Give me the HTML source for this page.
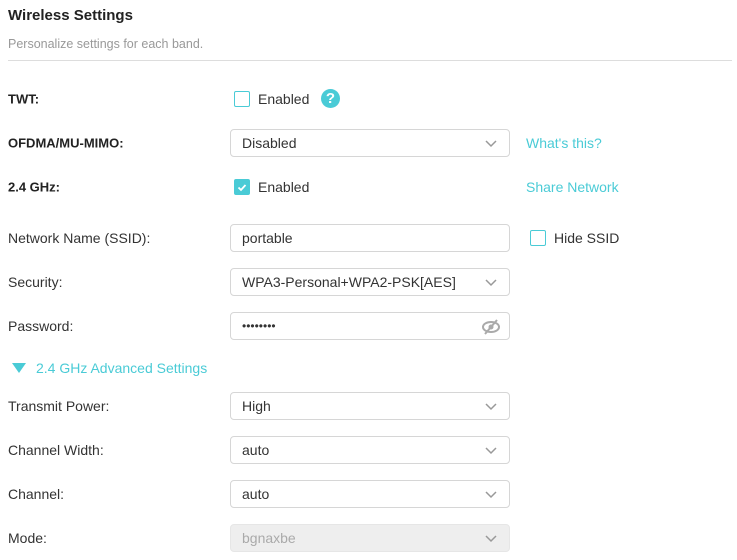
<!DOCTYPE html>
<html><head><style>
body{margin:0;width:737px;height:560px;overflow:hidden;background:#fff;font-family:"Liberation Sans",sans-serif;font-size:14px;color:#333;position:relative}
.a{position:absolute}
.lbl{position:absolute;left:8px;transform:translateY(-50%)}
.b{font-weight:bold;color:#222;font-size:13px}
.sel{position:absolute;left:230px;width:280px;height:28px;border:1px solid #d6d6d6;border-radius:4px;box-sizing:border-box;padding-left:11px;line-height:27px;font-size:14px;color:#333}
.sel svg{position:absolute;right:12px;top:10px}
.cb{position:absolute;width:14px;height:14px;border:1px solid #4acbd6;border-radius:2px}
.teal{color:#4acbd6}
</style></head><body>
<div class="a" style="left:8px;top:7px;font-size:15px;font-weight:bold;color:#222">Wireless Settings</div>
<div class="a" style="left:8px;top:37px;font-size:12.5px;color:#999">Personalize settings for each band.</div>
<div class="a" style="left:8px;top:60px;width:724px;height:1px;background:#ddd"></div>

<div class="lbl b" style="top:99px">TWT:</div>
<div class="cb" style="left:234px;top:91px"></div>
<div class="a" style="left:258px;top:91px">Enabled</div>
<div class="a" style="left:321px;top:89px;width:19px;height:19px;border-radius:50%;background:#4acbd6;color:#fff;font-weight:bold;text-align:center;line-height:19px;font-size:15px">?</div>

<div class="lbl b" style="top:143px">OFDMA/MU-MIMO:</div>
<div class="sel" style="top:129px">Disabled<svg width="12" height="8"><path d="M1 1l5 5 5-5" stroke="#999" stroke-width="1.5" fill="none"/></svg></div>
<div class="a teal" style="left:526px;top:135px">What's this?</div>

<div class="lbl b" style="top:187px">2.4 GHz:</div>
<div class="cb" style="left:234px;top:179px;background:#4acbd6"><svg width="14" height="14" style="position:absolute;left:0;top:0"><path d="M3.5 7.5l2.5 2.5 4.5-5" stroke="#fff" stroke-width="1.8" fill="none"/></svg></div>
<div class="a" style="left:258px;top:179px">Enabled</div>
<div class="a teal" style="left:526px;top:179px">Share Network</div>

<div class="lbl" style="top:238px">Network Name (SSID):</div>
<div class="sel" style="top:224px">portable</div>
<div class="cb" style="left:530px;top:230px"></div>
<div class="a" style="left:554px;top:230px">Hide SSID</div>

<div class="lbl" style="top:282px">Security:</div>
<div class="sel" style="top:268px">WPA3-Personal+WPA2-PSK[AES]<svg width="12" height="8"><path d="M1 1l5 5 5-5" stroke="#999" stroke-width="1.5" fill="none"/></svg></div>

<div class="lbl" style="top:326px">Password:</div>
<div class="sel" style="top:312px;font-size:12px">••••••••<svg width="22" height="16" style="top:6px;right:7px"><ellipse cx="11" cy="8" rx="8" ry="5" fill="none" stroke="#aaa" stroke-width="2"/><circle cx="11" cy="8" r="2.5" fill="#aaa"/><path d="M5 15L17 1" stroke="#aaa" stroke-width="2"/></svg></div>

<svg class="a" style="left:12px;top:363px" width="14" height="10"><path d="M0 0h14L7 10z" fill="#4acbd6"/></svg>
<div class="a teal" style="left:36px;top:360px">2.4 GHz Advanced Settings</div>

<div class="lbl" style="top:406px">Transmit Power:</div>
<div class="sel" style="top:392px">High<svg width="12" height="8"><path d="M1 1l5 5 5-5" stroke="#999" stroke-width="1.5" fill="none"/></svg></div>
<div class="lbl" style="top:450px">Channel Width:</div>
<div class="sel" style="top:436px">auto<svg width="12" height="8"><path d="M1 1l5 5 5-5" stroke="#999" stroke-width="1.5" fill="none"/></svg></div>
<div class="lbl" style="top:494px">Channel:</div>
<div class="sel" style="top:480px">auto<svg width="12" height="8"><path d="M1 1l5 5 5-5" stroke="#999" stroke-width="1.5" fill="none"/></svg></div>
<div class="lbl" style="top:538px">Mode:</div>
<div class="sel" style="top:524px;background:#eee;border-color:#e6e6e6;color:#aaa">bgnaxbe<svg width="12" height="8"><path d="M1 1l5 5 5-5" stroke="#999" stroke-width="1.5" fill="none"/></svg></div>
</body></html>
